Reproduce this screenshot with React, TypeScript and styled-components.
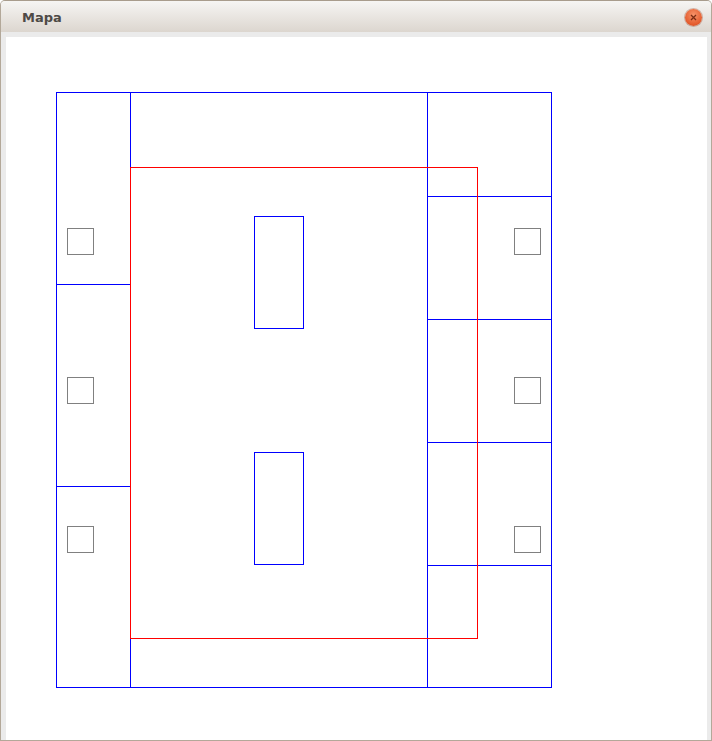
import React from "react";
import styled, { createGlobalStyle } from "styled-components";

const Global = createGlobalStyle`
  html, body { margin: 0; padding: 0; background: #ffffff; }
  body { font-family: "DejaVu Sans", "Liberation Sans", sans-serif; }
`;

const Window = styled.div`
  width: 712px;
  height: 741px;
  box-sizing: border-box;
  display: flex;
  flex-direction: column;
  border: 1px solid #b3a899;
  border-top-color: #a89c8c;
  border-radius: 5px 5px 0 0;
  background: #ebebeb;
  overflow: hidden;
`;

const TitleBar = styled.div`
  height: 31px;
  flex: none;
  display: flex;
  align-items: center;
  justify-content: space-between;
  padding: 0 9px 0 21px;
  background: linear-gradient(#f6f5f3, #dcd6cf);
`;

const Title = styled.span`
  font-family: "DejaVu Sans", sans-serif;
  font-weight: bold;
  font-size: 13px;
  color: #4e4a46;
  padding-top: 1px;
`;

const CloseButton = styled.div`
  width: 17px;
  height: 17px;
  border-radius: 50%;
  background: radial-gradient(circle at 50% 35%, #f7946a, #e35a2c 70%, #c9481f);
  box-shadow: 0 0 0 1px rgba(150, 70, 40, 0.35);
  display: flex;
  align-items: center;
  justify-content: center;
  margin-top: 2px;
`;

const ClientFrame = styled.div`
  flex: 1;
  padding: 5px 4px 3px 5px;
  display: flex;
`;

const Canvas = styled.div`
  flex: 1;
  background: #ffffff;
`;

const blue = "#0000ff";
const red = "#ff0000";
const gray = "#808080";

const squareYs = [228, 377, 526];

export default function App() {
  return (
    <>
      <Global />
      <Window>
        <TitleBar>
          <Title>Mapa</Title>
          <CloseButton>
            <svg width="9" height="9" viewBox="0 0 9 9">
              <path d="M2 2 L7 7 M7 2 L2 7" stroke="#7a2d14" strokeWidth="1.3" />
            </svg>
          </CloseButton>
        </TitleBar>
        <ClientFrame>
          <Canvas>
            <svg width="700" height="699" viewBox="6 37 700 699" shapeRendering="crispEdges">
              <g fill="none" strokeWidth="1">
                <rect x="56.5" y="92.5" width="495" height="595" stroke={blue} />
                <line x1="130.5" y1="92" x2="130.5" y2="688" stroke={blue} />
                <line x1="427.5" y1="92" x2="427.5" y2="688" stroke={blue} />
                <line x1="56" y1="284.5" x2="131" y2="284.5" stroke={blue} />
                <line x1="56" y1="486.5" x2="131" y2="486.5" stroke={blue} />
                {[196, 319, 442, 565].map((y) => (
                  <line key={y} x1="427" y1={y + 0.5} x2="552" y2={y + 0.5} stroke={blue} />
                ))}
                <rect x="254.5" y="216.5" width="49" height="112" stroke={blue} />
                <rect x="254.5" y="452.5" width="49" height="112" stroke={blue} />
                <rect x="130.5" y="167.5" width="347" height="471" stroke={red} />
                {squareYs.map((y) => (
                  <rect key={"l" + y} x="67.5" y={y + 0.5} width="26" height="26" stroke={gray} />
                ))}
                {squareYs.map((y) => (
                  <rect key={"r" + y} x="514.5" y={y + 0.5} width="26" height="26" stroke={gray} />
                ))}
              </g>
            </svg>
          </Canvas>
        </ClientFrame>
      </Window>
    </>
  );
}
